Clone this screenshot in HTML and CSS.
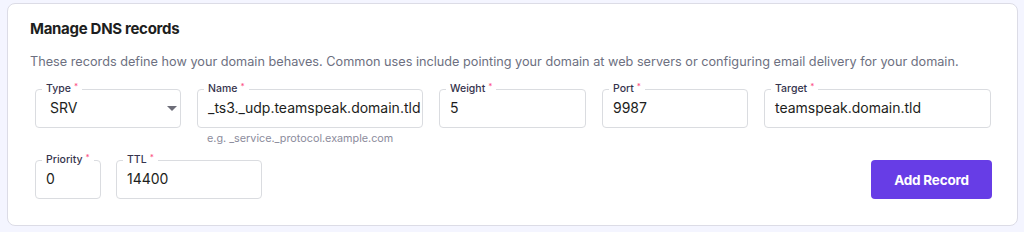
FILE: index.html
```html
<!DOCTYPE html>
<html lang="en">
<head>
<meta charset="utf-8">
<title>Manage DNS records</title>
<link rel="stylesheet" href="styles.css">
</head>
<body>
<section class="card">
  <h2 class="title">Manage DNS records</h2>
  <p class="subtitle">These records define how your domain behaves. Common uses include pointing your domain at web servers or configuring email delivery for your domain.</p>
  <form class="form">
    <div class="row row-top">
      <fieldset class="field w-sm">
        <legend class="label">Type<span class="req">*</span></legend>
        <div class="value select"><span class="select-text">SRV</span>
          <svg class="caret" width="10" height="5" viewBox="0 0 10 5"><path d="M0 0h10L5 5z" fill="#6d6d78"/></svg>
        </div>
      </fieldset>
      <div class="col w-lg">
        <fieldset class="field">
          <legend class="label">Name<span class="req">*</span></legend>
          <div class="value">_ts3._udp.teamspeak.domain.tld</div>
        </fieldset>
        <div class="helper">e.g. _service._protocol.example.com</div>
      </div>
      <fieldset class="field w-md">
        <legend class="label">Weight<span class="req">*</span></legend>
        <div class="value">5</div>
      </fieldset>
      <fieldset class="field w-sm">
        <legend class="label">Port<span class="req">*</span></legend>
        <div class="value">9987</div>
      </fieldset>
      <fieldset class="field w-xl">
        <legend class="label">Target<span class="req">*</span></legend>
        <div class="value">teamspeak.domain.tld</div>
      </fieldset>
    </div>
    <div class="row row-bottom">
      <fieldset class="field w-xs">
        <legend class="label">Priority<span class="req">*</span></legend>
        <div class="value">0</div>
      </fieldset>
      <fieldset class="field w-sm">
        <legend class="label">TTL<span class="req">*</span></legend>
        <div class="value">14400</div>
      </fieldset>
      <button type="button" class="btn">Add Record</button>
    </div>
  </form>
</section>
</body>
</html>
```
FILE: styles.css
```css
* { box-sizing: border-box; }
html, body { margin: 0; }
body {
  background: #f4f5ff;
  padding: 3px 6px 0 7px;
  font-family: "Inter", "Noto Sans", sans-serif;
  color: #1d1e20;
}
.card {
  background: #ffffff;
  border: 1px solid #dcdce6;
  border-radius: 8px;
  height: 223px;
  padding: 15px 25px 0 22px;
}
.title {
  margin: 0;
  font-size: 15px;
  line-height: 20px;
  font-weight: 700;
  letter-spacing: -0.3px;
  color: #1d1e20;
}
.subtitle {
  margin: 14px 0 0;
  font-size: 12.7px;
  line-height: 18px;
  color: #6d7081;
  white-space: nowrap;
}
.form {
  margin-top: 12px;
  padding-left: 5px;
}
.row {
  display: flex;
  gap: 16px;
  align-items: flex-start;
}
.row-bottom {
  margin-top: 8px;
  gap: 15px;
}
.field {
  margin: 0;
  padding: 0 10px 9px;
  border: 1px solid #dadce0;
  border-radius: 4px;
  min-width: 0;
}
.col { display: flex; flex-direction: column; }
.col .field { width: 100%; }
.w-xs { width: 66px; }
.w-sm { width: 146px; }
.w-md { width: 147px; }
.w-lg { width: 226px; }
.w-xl { width: 227px; }
.label {
  margin-left: -4px;
  padding: 0 4px;
  font-size: 10.5px;
  line-height: 12px;
  font-weight: 500;
  color: #36344d;
}
.req {
  color: #fc5185;
  font-size: 8px;
  vertical-align: top;
  margin-left: 3px;
  position: relative;
  top: -3px;
}
.value {
  margin-top: 3px;
  height: 20px;
  font-size: 14px;
  line-height: 20px;
  color: #1d1e20;
  white-space: nowrap;
}
.select {
  display: flex;
  justify-content: space-between;
  align-items: center;
}
.select-text { padding-left: 4px; }
.caret { margin-right: -7px; }
.helper {
  margin-top: 4px;
  padding-left: 10px;
  font-size: 10.8px;
  line-height: 14px;
  color: #8c8c9c;
}
.btn {
  margin-left: auto;
  align-self: flex-end;
  width: 121px;
  height: 39px;
  border: none;
  border-radius: 4px;
  background: #673de6;
  color: #ffffff;
  font-family: inherit;
  font-size: 13.5px;
  font-weight: 700;
  letter-spacing: -0.2px;
}
```
